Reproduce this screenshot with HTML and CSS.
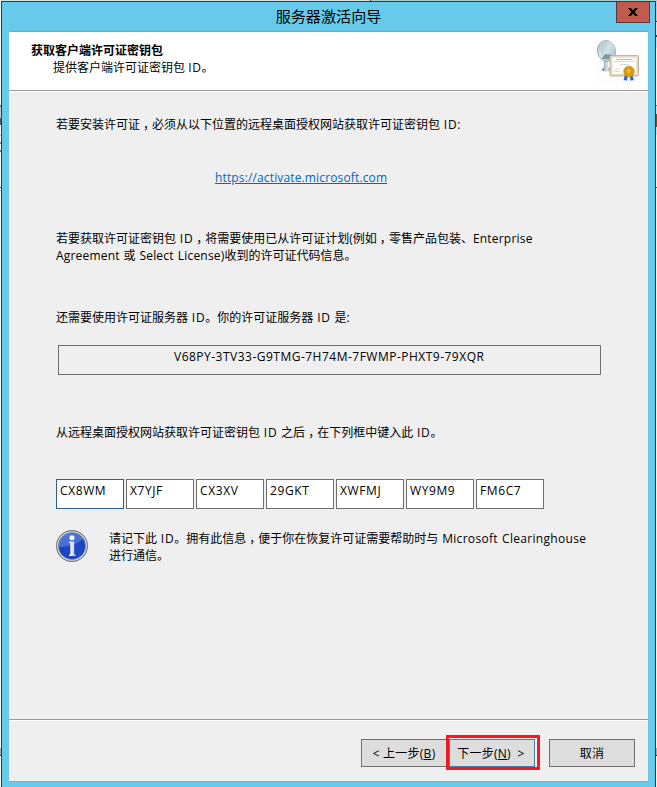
FILE: index.html
```html
<!DOCTYPE html>
<html lang="zh-CN">
<head>
<meta charset="utf-8">
<title>服务器激活向导</title>
<link rel="stylesheet" href="styles.css">
</head>
<body>
<div class="desktop">
<div class="strip strip-left"></div>
<div class="strip strip-right"></div>
<main class="window">
  <header class="titlebar">
    <h1 class="title">服务器激活向导</h1>
    <button class="close" aria-label="关闭"><svg width="10" height="8" viewBox="0 0 10 8"><path d="M0 0h3l2 2.4L7 0h3L6.6 4 10 8H7L5 5.6 3 8H0l3.4-4z"/></svg></button>
  </header>
  <div class="client">
    <section class="head">
      <div>
        <h2 class="head-title">获取客户端许可证密钥包</h2>
        <p class="head-sub">提供客户端许可证密钥包 <span class="id">ID</span>。</p>
      </div>
      <svg class="head-icon" width="45" height="44" viewBox="0 0 45 44">
        <defs>
          <linearGradient id="dish" x1="0" y1="0" x2="1" y2="1"><stop offset="0" stop-color="#a3b6bc"/><stop offset=".35" stop-color="#d5e4e9"/><stop offset="1" stop-color="#9cb4bc"/></linearGradient>
          <linearGradient id="shell" x1="0" y1="0" x2=".9" y2="1"><stop offset="0" stop-color="#a9bfc8"/><stop offset=".5" stop-color="#d0e2e8"/><stop offset="1" stop-color="#a9c1ca"/></linearGradient>
          <linearGradient id="stand" x1="0" x2="1"><stop offset="0" stop-color="#71868d"/><stop offset=".5" stop-color="#dce7ea"/><stop offset="1" stop-color="#71868d"/></linearGradient>
        </defs>
        <rect width="45" height="44" fill="#fdfdfd"/>
        <path d="M8 20h4v8l4 2v1.500q-5 2-10 0v-1.500l2-2z" fill="url(#stand)"/>
        <ellipse cx="10.500" cy="12" rx="9" ry="10.500" transform="rotate(-12 10.500 12)" fill="url(#dish)" stroke="#93a4a8" stroke-width=".8"/>
        <ellipse cx="12" cy="11" rx="7.500" ry="9" transform="rotate(-12 12 11)" fill="url(#shell)"/>
        <path d="M8 16l2-1 2 1 3-1-1 5H6z" fill="#7d959d"/>
        <rect x="14" y="16.500" width="28.500" height="20.500" rx="1" fill="#e3d8c7" stroke="#c3b39c"/>
        <rect x="16.200" y="18.500" width="24.300" height="16.500" fill="#fffefa" stroke="#e9e2d6" stroke-width=".5"/>
        <path d="M20.500 20.500h16" stroke="#abb0c6" stroke-dasharray="3 .5"/>
        <path d="M18.500 22.500h20M24 25.500h9M19 30h5M19 32.500h5" stroke="#cfd0dc" stroke-dasharray="3 .6"/>
        <path d="M29 35l-1.500 6.500 2-.5 1.500 1 1-6zM33.500 36l1 6 1.500-1 2 .5L36 35z" fill="#2468e7"/>
        <circle cx="33" cy="32.500" r="5.300" fill="#d99c14" stroke="#c28a10" stroke-width=".7"/>
        <circle cx="32.800" cy="32.200" r="2.800" fill="#f0b92c" stroke="#bf860e" stroke-width=".7"/>
      </svg>
    </section>
    <section class="content">
      <p class="line intro">若要安装许可证<span class="comma">，</span>必须从以下位置的远程桌面授权网站获取许可证密钥包 <span class="id">ID</span>:</p>
      <p class="line link-row"><a class="link" href="#">https://activate.microsoft.com</a></p>
      <p class="line need">若要获取许可证密钥包 <span class="id">ID</span><span class="comma">，</span>将需要使用已从许可证计划(例如<span class="comma">，</span>零售产品包装、<span class="latin">Enterprise</span><br><span class="latin">Agreement</span> 或 <span class="latin">Select License)</span>收到的许可证代码信息。</p>
      <p class="line also">还需要使用许可证服务器 <span class="id">ID</span>。你的许可证服务器 <span class="id">ID</span> 是:</p>
      <div class="server-id"><span class="server-text">V68PY-3TV33-G9TMG-7H74M-7FWMP-PHXT9-79XQR</span></div>
      <p class="line after">从远程桌面授权网站获取许可证密钥包 <span class="id">ID</span> 之后<span class="comma">，</span>在下列框中键入此 <span class="id">ID</span>。</p>
      <div class="keys">
        <div class="key active">CX8WM</div>
        <div class="key">X7YJF</div>
        <div class="key">CX3XV</div>
        <div class="key">29GKT</div>
        <div class="key">XWFMJ</div>
        <div class="key">WY9M9</div>
        <div class="key">FM6C7</div>
      </div>
      <div class="note">
        <svg width="32" height="32" viewBox="0 0 32 32">
          <defs>
            <linearGradient id="blue" x1="0" y1="0" x2=".6" y2="1"><stop offset="0" stop-color="#2f62d6"/><stop offset=".5" stop-color="#1c44bd"/><stop offset="1" stop-color="#1e48c8"/></linearGradient>
            <linearGradient id="stem" x1="0" x2="1"><stop offset="0" stop-color="#fff"/><stop offset="1" stop-color="#c4c4c4"/></linearGradient>
          </defs>
          <circle cx="16" cy="16" r="15.400" fill="#e4e4e4" stroke="#777" stroke-width="1.100"/>
          <circle cx="16" cy="16" r="13.600" fill="url(#blue)" stroke="#7f8ba8" stroke-width=".8"/>
          <path d="M3 17A13 13 0 0 1 27 9C22 14 12 17 3 17z" fill="#7ba0ee" opacity=".45"/>
          <circle cx="16" cy="7.800" r="2.500" fill="#fff"/>
          <path d="M13 11.500h5.200V24.500h1.300v1.500h-6.500v-1.500h1.300v-11.500H13z" fill="url(#stem)"/>
        </svg>
        <p class="line note-text">请记下此 <span class="id">ID</span>。拥有此信息<span class="comma">，</span>便于你在恢复许可证需要帮助时与 <span class="brand">Microsoft Clearinghouse</span><br>进行通信。</p>
      </div>
    </section>
    <footer class="footer">
      <button class="btn back">&lt; 上一步(<u>B</u>)</button>
      <span class="highlight"><button class="btn next">下一步(<u>N</u>) &nbsp;&gt;</button></span>
      <button class="btn cancel">取消</button>
    </footer>
  </div>
</main>
</div>
</body>
</html>
```
FILE: styles.css
```css
* { box-sizing: border-box; margin: 0; padding: 0; }
body { width: 657px; height: 787px; overflow: hidden; background: #fff;
  font: 12px/17px "Open Sans", "Noto Sans CJK SC", sans-serif; color: #000; }
.desktop { display: grid; grid-template-columns: 1px 655px 1px; height: 787px;
  padding-top: 1px; background: linear-gradient(90deg, #d7e3e3 370px, #444 370px, #444 371px, #aacccc 371px) top / 100% 1px no-repeat; }
.strip { grid-row: 1; }
.strip-left { grid-column: 1; background: linear-gradient(#fff 104px, #777 104px 106px, #ccc 106px 117px, #536067 117px 124px, #fff 124px 134px, #aaa 134px 135px, #fff 135px 141px, #9a8060 141px 143px, #fff 143px 149px, #777 149px 151px, #fff 151px 186px, #555 186px 187px, #fff 187px 747px, #aaa 747px 754px, #333 754px 755px, #fff 755px); }
.strip-right { grid-column: 3; background: linear-gradient(#b8d2d4 20px, #444 20px 21px, #dde 21px 34px, #444 34px 36px, #cdd 36px 47px, #fff 47px 104px, #777 104px 105px, #cdd 105px 113px, #70501c 113px 126px, #cdd 126px 134px, #fff 134px 186px, #555 186px 187px, #fff 187px 747px, #aaa 747px 754px, #333 754px 755px, #fff 755px); }
.window { grid-column: 2; grid-row: 1; display: flex; flex-direction: column; height: 786px;
  background: #67caea; border: 1px solid #283c46; border-bottom: 0; padding: 0 7px; }
.titlebar { height: 29px; display: grid; grid-template-columns: 1fr 34px; align-items: start; }
.title { grid-area: 1 / 1 / 2 / 3; font-size: 15.1px; font-weight: 400; line-height: 29px; text-align: center; }
.close { grid-area: 1 / 2; width: 34px; height: 21px; margin-left: 2px; background: #c35a50; border: 1px solid #5e3836; border-top: 0;
  display: flex; align-items: center; justify-content: center; }
.client { height: 751px; display: flex; flex-direction: column; background: #efefef;
  border-top: 1px solid #6fabc3; border-bottom: 1px solid #8cabb9; }
.head { height: 60px; display: flex; justify-content: space-between; padding: 10px 7px 0 22px; background: #fff; border-bottom: 1px solid #fff;
  box-shadow: inset 0 -1px #999; }
.head-title { font-size: 12px; font-weight: 700; line-height: 17px; }
.head-sub { padding-left: 22px; line-height: 17px; }
.head-icon { margin: -3px 0 0; }
.content { height: 627px; padding: 24px 44px 0 47px; }
.line { white-space: nowrap; word-spacing: .7px; }
.id { letter-spacing: .7px; }
.latin { letter-spacing: .2px; }
.brand { letter-spacing: .31px; }
.comma { padding-left: 3px; letter-spacing: -3px; }
.link-row { margin-top: 36px; padding-left: 159px; }
.link { color: #0066cc; letter-spacing: .14px; }
.need { margin-top: 44px; }
.also { margin-top: 45px; }
.server-id { height: 30px; width: 543px; margin: 19px 0 0 2px; border: 1px solid #6f6f6f; padding: 2px 0 0 115px; }
.server-text { letter-spacing: .49px; }
.after { margin-top: 49px; }
.keys { display: flex; gap: 2px; margin-top: 38px; }
.key { width: 68px; height: 30px; border: 1px solid #6f6f6f; background: #fff; padding: 2px 0 0 3px; letter-spacing: .6px; }
.key.active { border-color: #2b618c; }
.note { display: flex; gap: 21px; margin-top: 21px; }
.note-text { padding-top: 0; }
.footer { flex: 1; display: flex; align-items: flex-start; justify-content: flex-end; padding: 15px 13px 0 0;
  border-top: 1px solid #999; box-shadow: inset 0 1px #fff; }
.btn { font: inherit; color: #000; background: #ddd; border: 1px solid #707070; height: 28px; width: 86px; white-space: nowrap; letter-spacing: .25px; }
.back { width: 85px; margin-top: 4px; border-right: 0; }
.highlight { border: 3px solid #ed1c24; width: 94px; height: 35px; margin-right: 9px; padding: 1px 2px 0 0; background: #f7f2f2; }
.highlight .btn { display: block; border-color: #3c7fb1; padding-right: 2px; }
.cancel { margin-top: 4px; }
```
